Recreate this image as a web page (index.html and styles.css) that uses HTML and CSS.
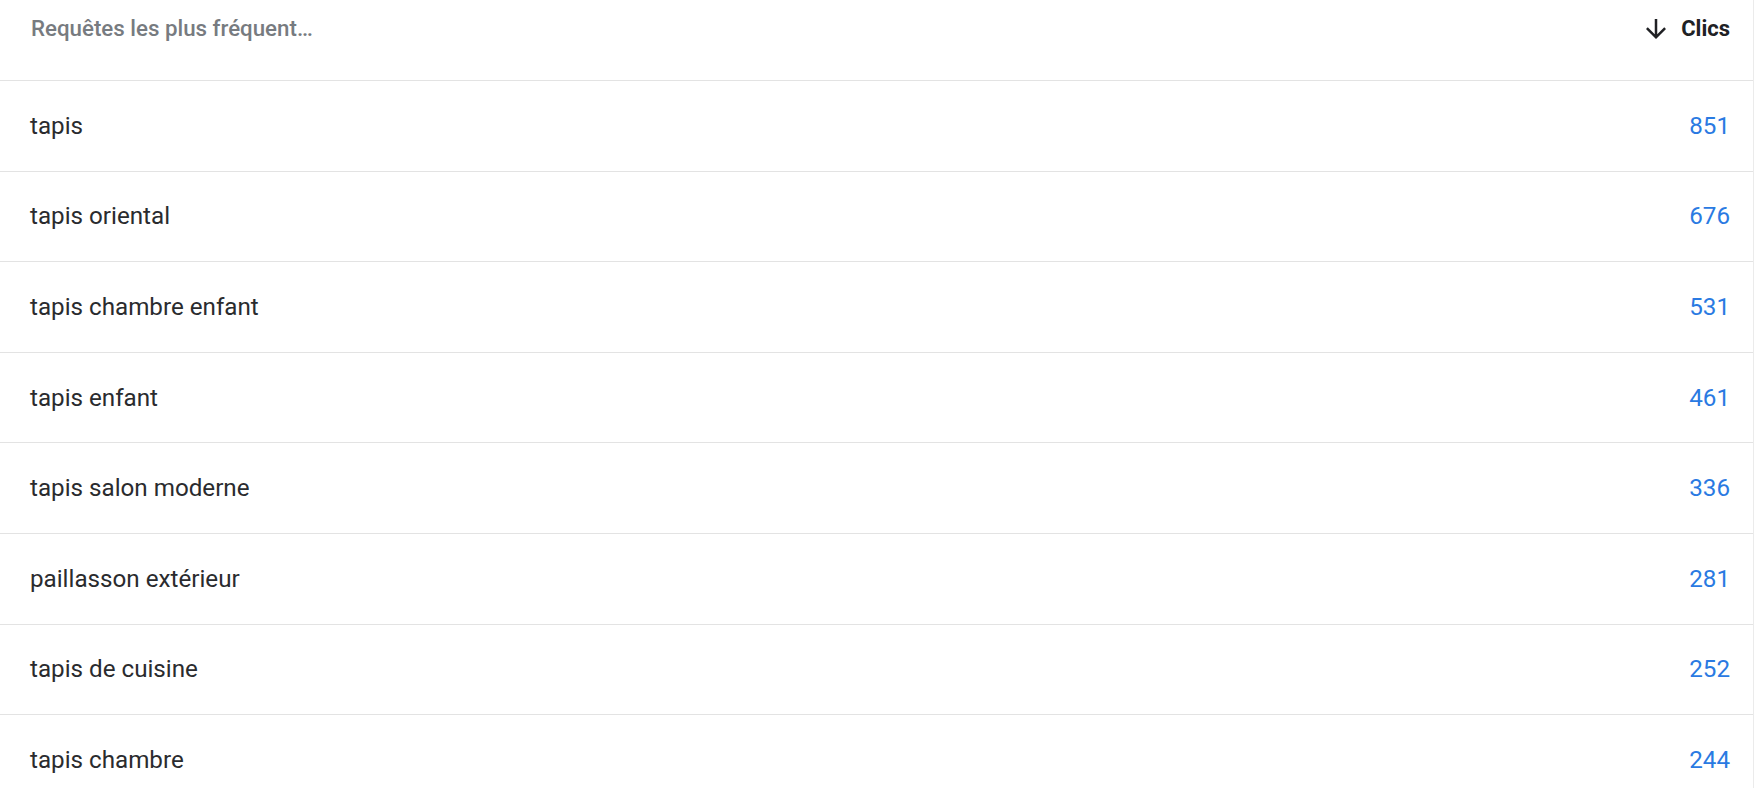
FILE: index.html
```html
<!DOCTYPE html>
<html lang="fr">
<head>
<meta charset="utf-8">
<title>Requêtes</title>
<link rel="stylesheet" href="styles.css">
</head>
<body>
<div class="table">
  <div class="head">
    <div class="head-title">Requêtes les plus fréquent…</div>
    <div class="head-metric">
      <svg class="arrow" viewBox="0 0 24 24" aria-hidden="true"><path d="M20 12l-1.41-1.41L13 16.17V4h-2v12.17l-5.58-5.59L4 12l8 8 8-8z" fill="#202124"/></svg>
      <span>Clics</span>
    </div>
  </div>
  <div class="row"><span class="q">tapis</span><span class="n">851</span></div>
  <div class="row"><span class="q">tapis oriental</span><span class="n">676</span></div>
  <div class="row"><span class="q">tapis chambre enfant</span><span class="n">531</span></div>
  <div class="row"><span class="q">tapis enfant</span><span class="n">461</span></div>
  <div class="row"><span class="q">tapis salon moderne</span><span class="n">336</span></div>
  <div class="row"><span class="q">paillasson extérieur</span><span class="n">281</span></div>
  <div class="row"><span class="q">tapis de cuisine</span><span class="n">252</span></div>
  <div class="row"><span class="q">tapis chambre</span><span class="n">244</span></div>
</div>
</body>
</html>
```

FILE: styles.css
```css
html, body {
  margin: 0;
  padding: 0;
  background: #fff;
}
body {
  font-family: Roboto, "Liberation Sans", Arial, sans-serif;
  overflow: hidden;
}
.table {
  width: 1753px;
  border-right: 1px solid #ebebeb;
}
.head {
  height: 81px;
  box-sizing: border-box;
  border-bottom: 1px solid #e3e3e3;
  display: flex;
  justify-content: space-between;
  align-items: flex-start;
  padding: 14px 23px 0 31px;
}
.head-title {
  font-size: 22.3px;
  font-weight: 500;
  color: #777b80;
  line-height: 28px;
}
.head-metric {
  display: flex;
  align-items: center;
  gap: 10px;
  font-size: 22px;
  font-weight: 700;
  color: #202124;
  line-height: 28px;
}
.arrow {
  width: 30px;
  height: 30px;
}
.row {
  height: 90.6px;
  box-sizing: border-box;
  border-bottom: 1px solid #e3e3e3;
  display: flex;
  justify-content: space-between;
  align-items: center;
  padding: 0 23px 0 30px;
  font-size: 24.2px;
}
.q {
  color: #2a2b2e;
}
.n {
  color: #2a7ae2;
}
```
